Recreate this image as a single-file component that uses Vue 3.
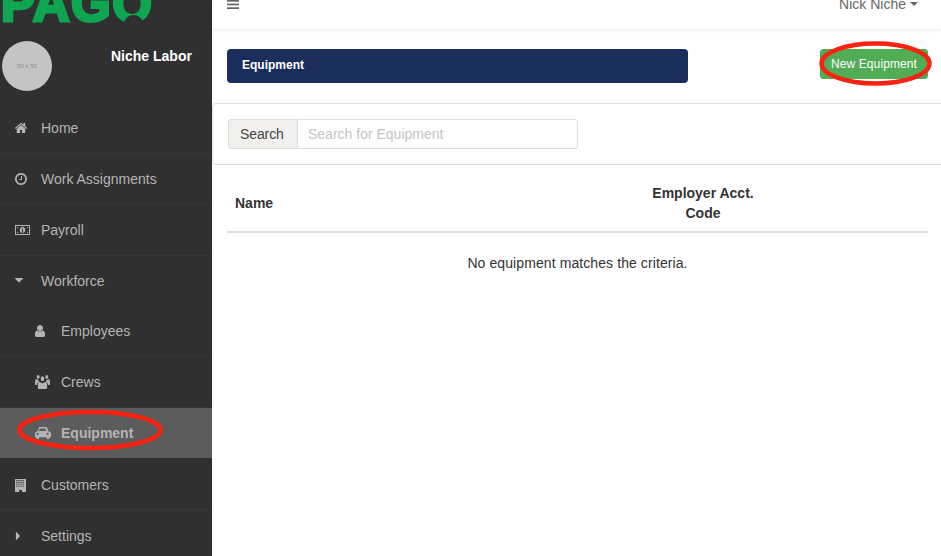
<script setup>
const home = 'M1472 992v480q0 26-19 45t-45 19h-384v-384h-256v384h-384q-26 0-45-19t-19-45v-480q0-1 .5-3t.5-3l575-474 575 474q1 2 1 6zm223-69l-62 74q-8 9-21 11h-3q-13 0-21-7l-692-577-692 577q-12 8-24 7-13-2-21-11l-62-74q-8-10-7-23.5t11-21.5l719-599q32-26 76-26t76 26l244 204v-195q0-14 9-23t23-9h192q14 0 23 9t9 23v408l219 182q10 8 11 21.5t-7 23.5z'
const clock = 'M1024 544v448q0 14-9 23t-23 9h-320q-14 0-23-9t-9-23v-64q0-14 9-23t23-9h224v-352q0-14 9-23t23-9h64q14 0 23 9t9 23zm416 352q0-148-73-273t-198-198-273-73-273 73-198 198-73 273 73 273 198 198 273 73 273-73 198-198 73-273zm224 0q0 209-103 385.5t-279.5 279.5-385.5 103-385.5-103-279.5-279.5-103-385.5 103-385.5 279.5-279.5 385.5-103 385.5 103 279.5 279.5 103 385.5z'
const user = 'M1536 1399q0 109-62.5 187t-150.5 78h-854q-88 0-150.5-78t-62.5-187q0-85 8.5-160.5t31.5-152 58.5-131 94-89 134.5-34.5q131 128 313 128t313-128q76 0 134.5 34.5t94 89 58.5 131 31.5 152 8.5 160.5zm-256-887q0 159-112.5 271.5t-271.5 112.5-271.5-112.5-112.5-271.5 112.5-271.5 271.5-112.5 271.5 112.5 112.5 271.5z'
const money = 'M64 384h1664v1024H64zM176 496v800h1440V496zM896 560a300 336 0 1 0 .1 0zM820 740h130v330h80v70H780v-70h80V820h-40zM290 600h130q-20 100-130 130zM1502 600h-130q20 100 130 130zM290 1192h130q-20-100-130-130zM1502 1192h-130q20-100 130-130z'
const users = 'M896 420a210 210 0 1 0 .1 0zM380 300a170 170 0 1 0 .1 0zM1412 300a170 170 0 1 0 .1 0zM560 900q130 130 336 130t336-130q220 0 220 400v120q0 120-130 120H470q-130 0-130-120v-120q0-400 220-400zM130 660q100 90 250 90 40 0 80 0-30 90-10 170-190 40-210 260H90q-90 0-90-90 0-430 130-430zM1662 660q-100 90-250 90-40 0-80 0 30 90 10 170 190 40 210 260h150q90 0 90-90 0-430-130-430z'
const car = 'M560 320h672q110 0 150 110l110 330q270 30 270 210v430h-160v130q0 60-60 60h-130q-60 0-60-60v-130H544v130q0 60-60 60H354q-60 0-60-60v-130H130V970q0-180 270-210l110-330q10-110 50-110zM610 470l-90 280h752l-90-280zM380 920a120 120 0 1 0 .1 0zM1412 920a120 120 0 1 0 .1 0z'
const building = 'M320 128h1152v1536H1040v-224H752v224H320zM450 260v120h120V260zM670 260v120h120V260zM890 260v120h120V260zM1110 260v120h120V260zM450 480v120h120V480zM670 480v120h120V480zM890 480v120h120V480zM1110 480v120h120V480zM450 700v120h120V700zM670 700v120h120V700zM890 700v120h120V700zM1110 700v120h120V700zM450 920v120h120V920zM670 920v120h120V920zM890 920v120h120V920zM1110 920v120h120V920z'
const caretDown = 'M1408 704q0 26-19 45l-448 448q-19 19-45 19t-45-19l-448-448q-19-19-19-45t19-45 45-19h896q26 0 45 19t19 45z'
const caretRight = 'M1152 896q0 26-19 45l-448 448q-19 19-45 19t-45-19-19-45V448q0-26 19-45t45-19 45 19l448 448q19 19 19 45z'

const menu = [
  { label: 'Home', icon: home, vb: '90 256 1612 1280', w: 12, h: 10 },
  { label: 'Work Assignments', icon: clock, vb: '128 128 1536 1536', w: 12, h: 12 },
  { label: 'Payroll', icon: money, vb: '64 384 1664 1024', w: 15, h: 10 },
  { label: 'Workforce', icon: caretDown, vb: '384 640 1024 576', w: 8, h: 4.5, plain: true, short: true },
  { label: 'Employees', icon: user, vb: '256 128 1280 1536', w: 10, h: 12, sub: true },
  { label: 'Crews', icon: users, vb: '0 300 1792 1240', w: 15, h: 14, sub: true },
  { label: 'Equipment', icon: car, vb: '130 320 1632 1270', w: 16, h: 12, sub: true, active: true },
  { label: 'Customers', icon: building, vb: '320 128 1152 1536', w: 11, h: 13, low: true },
  { label: 'Settings', icon: caretRight, vb: '448 384 704 1024', w: 5, h: 8, plain: true, low: true }
]
</script>

<template>
  <div class="app">
    <aside class="sidebar">
      <div class="logo"><span class="logo-text">PAGO</span><i class="logo-notch"></i></div>
      <div class="profile">
        <div class="avatar">50 x 50</div>
        <div class="org">Niche Labor</div>
      </div>
      <nav class="menu">
        <a
          v-for="item in menu"
          :key="item.label"
          class="item"
          :class="{ sub: item.sub, active: item.active, plain: item.plain, short: item.short, low: item.low }"
        >
          <span class="icon">
            <svg :width="item.w" :height="item.h" :viewBox="item.vb" preserveAspectRatio="none" fill="currentColor" fill-rule="evenodd"><path :d="item.icon" /></svg>
          </span>
          <span>{{ item.label }}</span>
        </a>
      </nav>
    </aside>

    <main class="main">
      <header class="topbar">
        <svg class="burger" width="12" height="9" viewBox="0 0 12 9" fill="#666"><rect y="0" width="12" height="1.7" /><rect y="3.6" width="12" height="1.7" /><rect y="7.3" width="12" height="1.7" /></svg>
        <div class="who">Nick Niche<i class="caret"></i></div>
      </header>

      <div class="titlerow">
        <h1 class="title">Equipment</h1>
        <button class="new">New Equipment</button>
      </div>

      <section class="panel">
        <div class="search">
          <span class="addon">Search</span>
          <input class="field" placeholder="Search for Equipment" />
        </div>
      </section>

      <table class="grid">
        <thead>
          <tr>
            <th class="name">Name</th>
            <th class="code">Employer Acct.<br />Code</th>
            <th class="rest"></th>
          </tr>
        </thead>
        <tbody>
          <tr><td colspan="3">No equipment matches the criteria.</td></tr>
        </tbody>
      </table>
    </main>

    <svg class="mark" width="941" height="556" viewBox="0 0 941 556" fill="none" stroke="#fa2212" stroke-width="4.5">
      <ellipse cx="90" cy="430" rx="70.5" ry="18" />
      <ellipse cx="875.5" cy="63.5" rx="54" ry="20" />
    </svg>
  </div>
</template>

<style scoped>
.app {
  position: relative;
  display: flex;
  width: 941px;
  height: 556px;
  overflow: hidden;
  background: #fff;
  font-family: "Liberation Sans", Arial, sans-serif;
  font-size: 14px;
  color: #333;
}
.sidebar {
  flex: 0 0 212px;
  background: #303030;
}
.logo {
  position: relative;
  height: 24px;
  overflow: hidden;
}
.logo-text {
  display: block;
  margin: -22px 0 0 1px;
  font-size: 51px;
  line-height: 52px;
  font-weight: 700;
  letter-spacing: 1.5px;
  color: #0fa651;
  -webkit-text-stroke: 3px #0fa651;
  white-space: nowrap;
}
.logo-notch {
  position: absolute;
  left: 124px;
  top: 15px;
  width: 19px;
  height: 9px;
  border-radius: 10px 10px 0 0;
  background: #303030;
}
.profile {
  height: 79px;
  padding: 17px 0 0 2px;
  display: flex;
  box-sizing: border-box;
}
.avatar {
  width: 50px;
  height: 50px;
  border-radius: 50%;
  background: #c4c4c4;
  color: #8a8a8a;
  font-size: 6px;
  display: flex;
  align-items: center;
  justify-content: center;
}
.org {
  margin: 7px 0 0 59px;
  color: #fff;
  font-weight: 700;
  font-size: 14px;
  line-height: 16px;
}
.item {
  display: flex;
  align-items: center;
  height: 51px;
  box-sizing: border-box;
  padding: 0 0 0 15px;
  border-bottom: 1px solid #383838;
  color: #b4b4b4;
  font-size: 14px;
}
.item.short { height: 50px; }
.item.low { padding-top: 2px; }
.item.plain { border-bottom-color: transparent; }
.item.sub { padding-left: 35px; }
.item.active {
  background: #5c5c5c;
  font-weight: 700;
  border-bottom-color: #303030;
}
.icon {
  width: 26px;
  display: flex;
  align-items: center;
}
.main {
  flex: 1;
  min-width: 0;
}
.topbar {
  height: 29px;
  box-sizing: border-box;
  box-shadow: 0 1px 4px rgba(0, 0, 0, 0.1);
  display: flex;
  justify-content: space-between;
  padding: 0 23px 0 15px;
  align-items: flex-start;
}
.who {
  margin-top: -4px;
  line-height: 16px;
  font-size: 14px;
  color: #666;
}
.caret {
  display: inline-block;
  margin-left: 4px;
  vertical-align: 3px;
  border-top: 4.5px solid #666;
  border-left: 4.5px solid transparent;
  border-right: 4.5px solid transparent;
}
.titlerow {
  display: flex;
  justify-content: space-between;
  align-items: flex-start;
  padding: 20px 13px 0 15px;
  height: 54px;
}
.title {
  margin: 0;
  width: 461px;
  height: 34px;
  box-sizing: border-box;
  padding-left: 15px;
  background: #1b2d5b;
  border-radius: 4px;
  color: #fff;
  font-size: 12px;
  font-weight: 700;
  line-height: 33px;
}
.new {
  width: 108px;
  height: 30px;
  padding: 0;
  border: 1px solid #4cae4c;
  border-radius: 3px;
  background: #51ac55;
  color: #fff;
  letter-spacing: 0.1px;
  font: 12px "Liberation Sans", Arial, sans-serif;
}
.panel {
  height: 62px;
  box-sizing: border-box;
  margin-right: -6px;
  padding: 15px;
  border: 1px solid #ddd;
  border-radius: 4px;
  background: #fff;
}
.search {
  display: flex;
  width: 350px;
  height: 30px;
}
.addon {
  width: 70px;
  box-sizing: border-box;
  padding-left: 11px;
  background: #f1f0ee;
  border: 1px solid #e0dcd6;
  border-radius: 3px 0 0 3px;
  line-height: 28px;
  color: #444;
  letter-spacing: -0.1px;
}
.field {
  flex: 1;
  min-width: 0;
  box-sizing: border-box;
  padding: 0 10px;
  border: 1px solid #e0dcd6;
  border-left: 0;
  border-radius: 0 3px 3px 0;
  outline: 0;
  font: 14px "Liberation Sans", Arial, sans-serif;
}
.field::placeholder { color: #c4c4c4; }
.grid {
  width: 701px;
  margin: 9px 0 0 15px;
  border-collapse: collapse;
  table-layout: fixed;
}
.grid th {
  height: 58px;
  padding: 8px;
  box-sizing: border-box;
  border-bottom: 2px solid #ddd;
  line-height: 20px;
  font-weight: 700;
  color: #333;
}
.name { text-align: left; width: 325px; }
.code { text-align: center; width: 302px; }
.rest { width: 74px; }
.grid td {
  padding: 20px 0 0;
  text-align: center;
  line-height: 20px;
  color: #333;
  letter-spacing: 0.09px;
}
.mark {
  position: absolute;
  left: 0;
  top: 0;
  pointer-events: none;
}
</style>
